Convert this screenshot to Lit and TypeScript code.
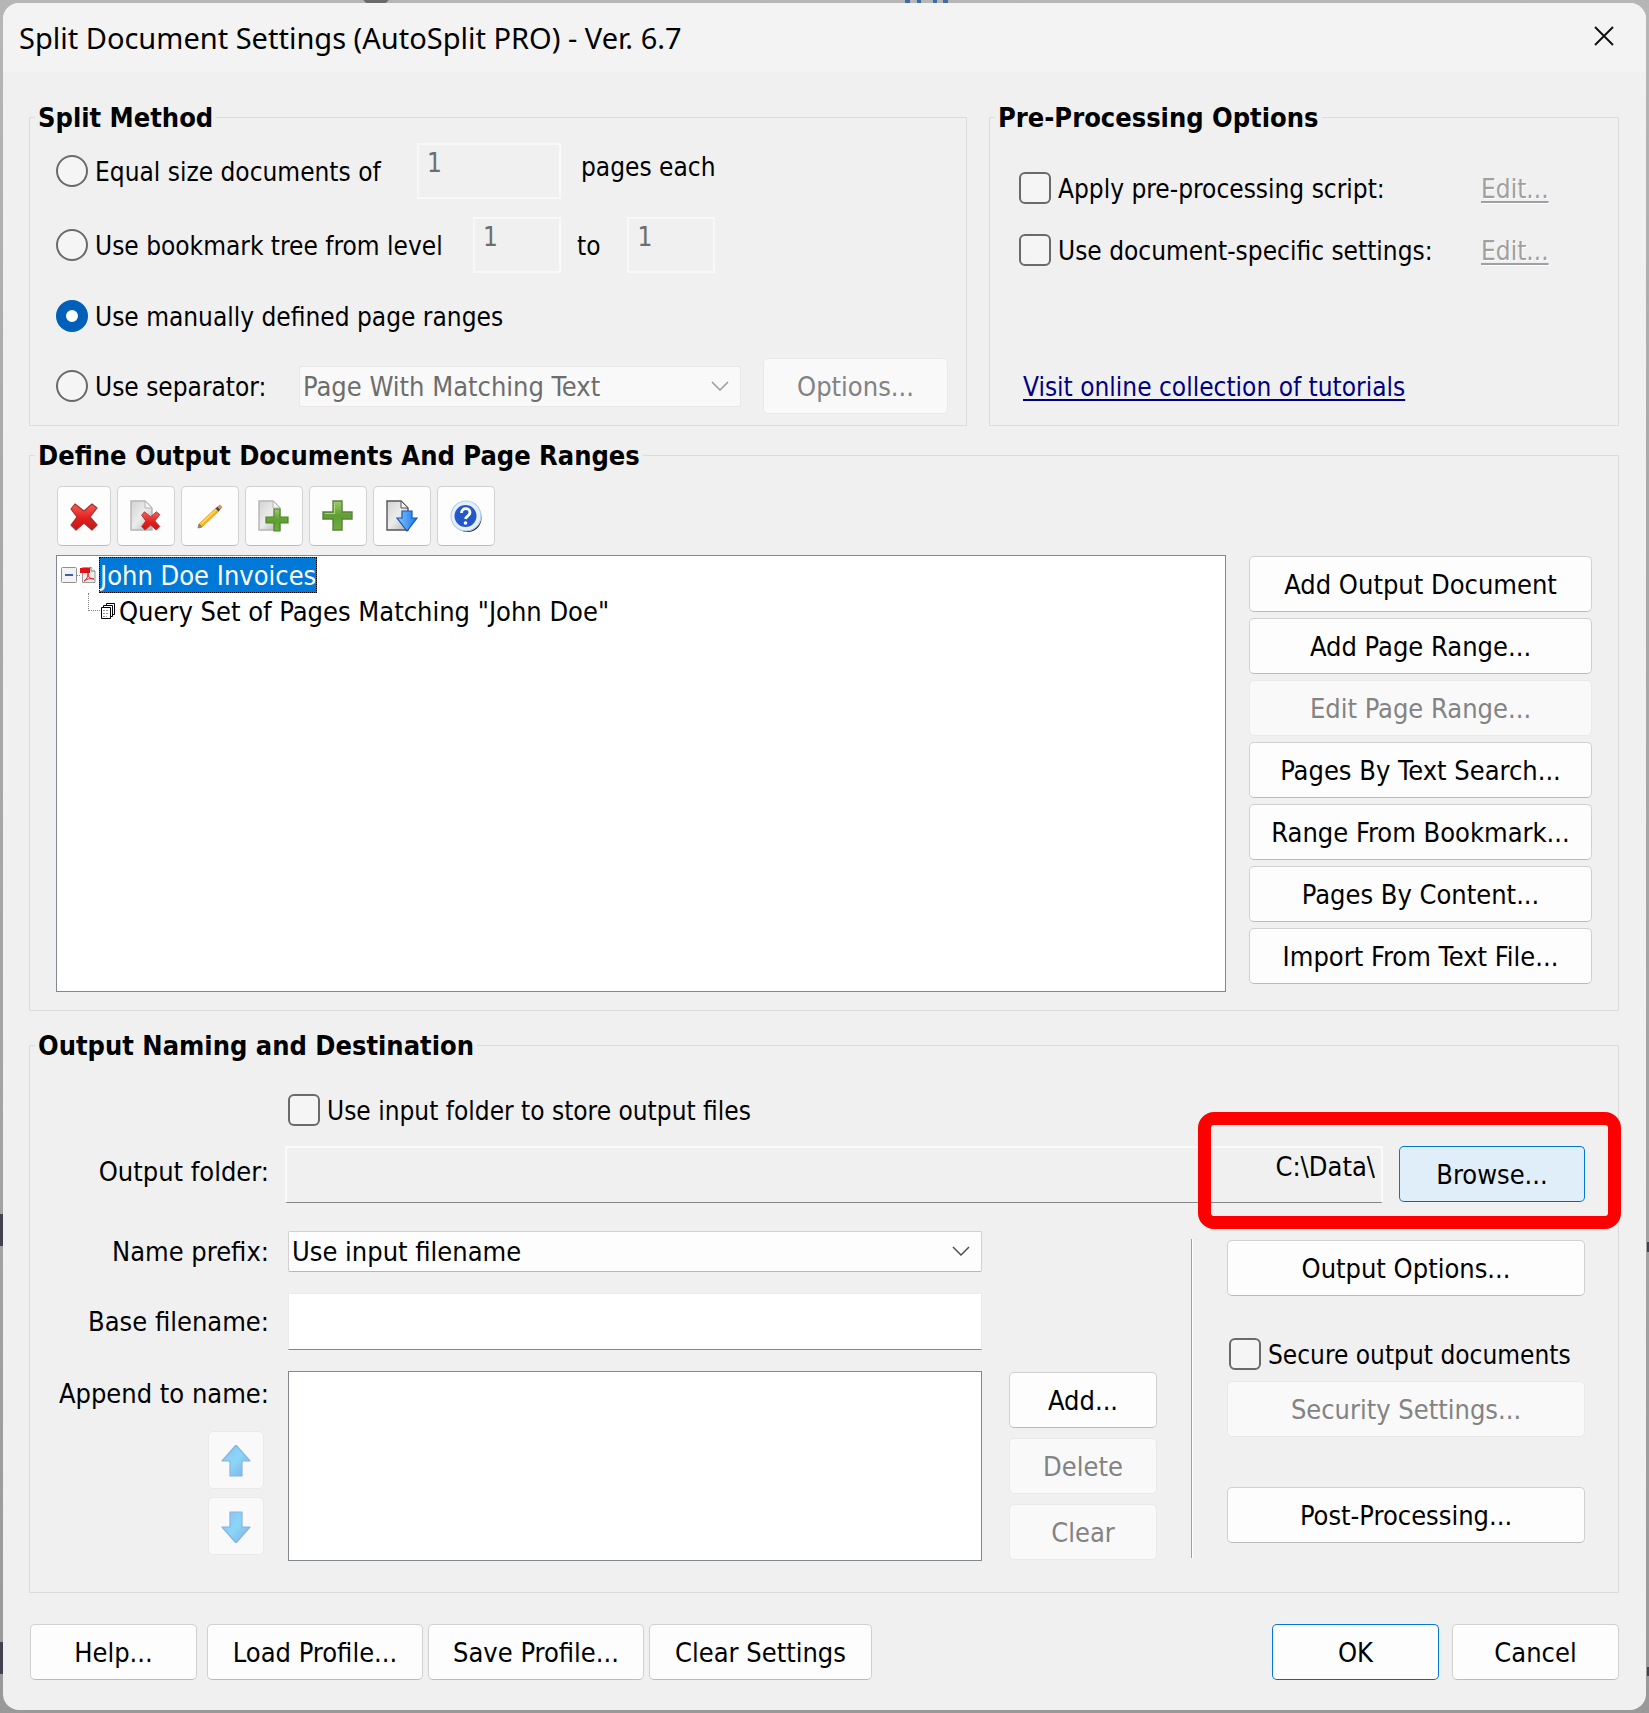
import { LitElement, html, css, svg } from "lit";
import { customElement, state } from "lit/decorators.js";

const docBody = (outline: string) => svg`
  <path d="M1 1H15L22 8V30H1Z" fill="url(#paper)" stroke=${outline} stroke-width="1.4"></path>
  <path d="M15 1V8H22Z" fill="#f4f4f4" stroke=${outline} stroke-width="1"></path>`;

const paperFill = svg`
  <linearGradient id="paper" x1="0" y1="0" x2="1" y2="1">
    <stop offset="0" stop-color="#d2d2d2"></stop>
    <stop offset="0.5" stop-color="#ececec"></stop>
    <stop offset="1" stop-color="#b0b0b0"></stop>
  </linearGradient>`;

const redFill = svg`
  <linearGradient id="red" x1="0" y1="0" x2="0" y2="1">
    <stop offset="0" stop-color="#f4605c"></stop>
    <stop offset="0.55" stop-color="#e2201f"></stop>
    <stop offset="1" stop-color="#c81414"></stop>
  </linearGradient>`;

const greenFill = svg`
  <linearGradient id="green" x1="0" y1="0" x2="0" y2="1">
    <stop offset="0" stop-color="#9ccb6c"></stop>
    <stop offset="0.5" stop-color="#5f9f31"></stop>
    <stop offset="1" stop-color="#6fae3c"></stop>
  </linearGradient>`;

const cross = svg`<path d="M7 4L16 11L24 4L29 8L22 17L29 25L24 30L16 23L8 30L3 25L9 17L3 9Z"
  fill="url(#red)" stroke="#a5302c" stroke-width="1.2" stroke-linejoin="round"></path>`;

const icons: Record<string, unknown> = {
  remove: svg`<defs>${redFill}</defs>${cross}`,
  removeDoc: svg`<defs>${redFill}${paperFill}</defs>${docBody("#b4b4b4")}
    <g transform="translate(9.500 9) scale(0.7)">${cross}</g>`,
  edit: svg`
    <path d="M5 24L22 8L25 11L8 27Z" fill="#fbb40e" stroke="#d9a02a" stroke-width="0.8"></path>
    <path d="M7 24L22.500 9.500" stroke="#ffd970" stroke-width="1.4"></path>
    <path d="M5 24L8 27L4 28Z" fill="#8b8578" stroke="#8b8578"></path>
    <path d="M21.500 8.500L23.500 6.500L26.500 9.500L24.500 11.500Z" fill="#4d4a50"></path>
    <path d="M23.500 6.500L26 4.500L28.500 7L26.500 9.500Z" fill="#e58a5c"></path>`,
  addDoc: svg`<defs>${greenFill}${paperFill}</defs>${docBody("#b4b4b4")}
    <path d="M16 9H22V17H30V23H22V31H16V23H8V17H16Z" fill="url(#green)" stroke="#4d8426" stroke-width="1.2"></path>`,
  add: svg`<defs>${greenFill}</defs>
    <path d="M11 1H20V12H30V19H20V30H11V19H1V12H11Z" fill="url(#green)" stroke="#5c7f40" stroke-width="1.4"></path>
    <path d="M12.500 2.500V13.500H3" fill="none" stroke="#a9d57e" stroke-width="1.2"></path>`,
  importDoc: svg`<defs>${paperFill}
      <linearGradient id="blue" x1="0" y1="0" x2="1" y2="0">
        <stop offset="0" stop-color="#86c8fb"></stop>
        <stop offset="1" stop-color="#1673ee"></stop>
      </linearGradient></defs>${docBody("#555")}
    <path d="M16 11H26V18H31L21 31L11 18H16Z" fill="url(#blue)" stroke="#1556b8" stroke-width="1.2"></path>`,
  help: svg`
    <circle cx="17.500" cy="18" r="14" fill="#0d1022"></circle>
    <circle cx="16" cy="16" r="15" fill="#e4f0fb" stroke="#b5cfec" stroke-width="1.2"></circle>
    <circle cx="15.500" cy="16" r="11" fill="#2358c8"></circle>
    <path d="M11.500 13C11.500 7 20 7.500 20 12.500C20 16 16 15.500 15.500 19" fill="none" stroke="#fff" stroke-width="2.800"></path>
    <circle cx="15.500" cy="23" r="1.800" fill="#fff"></circle>`,
};

const toolbar: [string, string][] = [
  ["remove", "Delete"],
  ["removeDoc", "Delete document"],
  ["edit", "Edit"],
  ["addDoc", "Add document"],
  ["add", "Add range"],
  ["importDoc", "Import"],
  ["help", "Help"],
];

const rangeActions: [string, boolean][] = [
  ["Add Output Document", false],
  ["Add Page Range...", false],
  ["Edit Page Range...", true],
  ["Pages By Text Search...", false],
  ["Range From Bookmark...", false],
  ["Pages By Content...", false],
  ["Import From Text File...", false],
];

const chevron = html`<svg class="chevron" viewBox="0 0 18 10" aria-hidden="true">
  <path d="M1 1L9 9L17 1" fill="none" stroke="currentColor" stroke-width="1.5"></path>
</svg>`;

const arrow = (down: boolean) => html`<svg class="move-icon" viewBox="0 0 30 32" aria-hidden="true">
  <defs>
    <linearGradient id="sky" x1="0" y1="0" x2="1" y2="1">
      <stop offset="0" stop-color="#8fc0ee"></stop>
      <stop offset="0.5" stop-color="#8ad6f8"></stop>
      <stop offset="1" stop-color="#7fabe0"></stop>
    </linearGradient>
  </defs>
  <path d=${down ? "M9 1H21V16H29L15 32L1 16H9Z" : "M15 0L29 16H21V31H9V16H1Z"}
    fill="url(#sky)" stroke="#86b4e2" stroke-width="1.2" stroke-linejoin="round"></path>
</svg>`;

@customElement("app-root")
export class AppRoot extends LitElement {
  @state() private method = "manual";

  static styles = css`
    :host {
      display: flex;
      box-sizing: border-box;
      min-height: 100vh;
      padding: 3px;
      background:
        radial-gradient(circle at 376px -9px, #6b6b6b 15px, transparent 16px),
        linear-gradient(#3a6ea5, #3a6ea5) 905px 0 / 5px 3px no-repeat,
        linear-gradient(#3a6ea5, #3a6ea5) 917px 0 / 4px 3px no-repeat,
        linear-gradient(#3a6ea5, #3a6ea5) 933px 0 / 4px 3px no-repeat,
        linear-gradient(#3a6ea5, #3a6ea5) 943px 0 / 5px 3px no-repeat,
        linear-gradient(#44424f, #44424f) 0 1214px / 3px 32px no-repeat,
        linear-gradient(#44424f, #44424f) 0 1642px / 3px 32px no-repeat,
        linear-gradient(#44424f, #44424f) 100% 1242px / 2px 10px no-repeat,
        linear-gradient(#44424f, #44424f) 100% 1667px / 2px 9px no-repeat,
        linear-gradient(#b6b6b6, #a9a9a9 30%, #a3a3a3 70%, #999);
      font-family: "DejaVu Sans Condensed", "DejaVu Sans", sans-serif;
      font-stretch: condensed;
      font-size: 27px;
      line-height: 33px;
      color: #000;
    }
    * { box-sizing: border-box; }
    .dialog {
      flex: 1;
      min-width: 0;
      display: flex;
      flex-direction: column;
      background: #f0f0f0;
      border-radius: 16px;
      overflow: hidden;
    }
    .titlebar {
      display: flex;
      align-items: center;
      justify-content: space-between;
      height: 69px;
      padding: 0 27px 0 16px;
      background: #f3f3f3;
    }
    .title {
      margin: 0;
      font-family: "Noto Sans", sans-serif;
      font-stretch: normal;
      font-weight: 400;
      font-size: 29px;
    }
    .close {
      display: flex;
      padding: 3px 5px 7px;
      border: 0;
      background: none;
    }
    .close-icon { width: 20px; height: 20px; }
    .body {
      flex: 1;
      display: flex;
      flex-direction: column;
      padding: 29px 27px 30px 26px;
    }
    .top {
      display: grid;
      grid-template-columns: minmax(0, 938fr) minmax(0, 630fr);
      gap: 22px;
    }
    fieldset {
      display: flex;
      flex-direction: column;
      min-width: 0;
      margin: 0;
      padding: 0;
      border: 1px solid #dcdcdc;
    }
    legend {
      margin-left: 5px;
      padding: 1px 3px 0;
      font-weight: 700;
      line-height: 32px;
    }
    input, select, button {
      font: inherit;
      color: inherit;
      margin: 0;
    }
    .choice { display: flex; align-items: center; gap: 7px; height: 32px; font-size: 26px; white-space: nowrap; }
    .choice-text { padding-top: 3px; }
    .radio, .check {
      appearance: none;
      flex: none;
      width: 32px;
      height: 32px;
      border: 2px solid #6a6a6a;
      background: #f5f5f5;
    }
    .radio { border-radius: 50%; }
    .radio:checked { border: 10px solid #005fb8; background: #fff; }
    .check { border-radius: 6px; }
    .methods { display: flex; flex-direction: column; gap: 18px; padding: 9px 18px 11px 26px; }
    .method { display: flex; align-items: center; min-height: 49px; white-space: nowrap; font-size: 26px; }
    .by-size { width: 361px; }
    .by-level { width: 417px; }
    .by-separator { width: 243px; }
    .after-size { margin-left: 20px; }
    .between { margin: 0 27px 0 16px; padding-top: 3px; }
    .lifted { padding-bottom: 7px; }
    .number {
      width: 88px;
      height: 56px;
      padding: 0 8px 16px;
      border: 2px solid #f8f8f8;
      background: #f0f0f0;
      color: #6d6d6d;
    }
    .number.wide { width: 144px; }
    .combo { position: relative; display: flex; flex: 1; min-width: 0; font-size: 27px; }
    .combo-box {
      appearance: none;
      flex: 1;
      min-width: 0;
      height: 41px;
      padding: 0 40px 0 3px;
      border: 1px solid #d0d0d0;
      border-bottom-color: #b8b8b8;
      border-radius: 2px;
      background: #fdfdfd;
      opacity: 1;
    }
    .combo-box:disabled { border-color: #e8e8e8; background: #f9f9f9; color: #6d6d6d; }
    .chevron {
      position: absolute;
      right: 12px;
      top: 15px;
      width: 18px;
      height: 10px;
      color: #505050;
      pointer-events: none;
    }
    .combo-box:disabled + .chevron { color: #9a9a9a; }
    .button {
      height: 56px;
      padding: 1px 0 0;
      border: 1px solid #d0d0d0;
      border-bottom-color: #bababa;
      border-radius: 5px;
      background: #fdfdfd;
      font-size: 27px;
      text-align: center;
      white-space: nowrap;
    }
    .button:disabled { border-color: #e9e9e9; background: #f9f9f9; color: #838383; }
    .button.primary { border-color: #0078d4; border-bottom-color: #0067c0; }
    .button.hot { background: #e0eef9; }
    .options { width: 185px; margin-left: 22px; }
    .pre { flex: 1; display: flex; flex-direction: column; gap: 30px; padding: 36px 28px 21px 29px; height: 291px; font-size: 26px; }
    .pre-row { display: grid; grid-template-columns: 462px auto; justify-content: start; height: 32px; align-items: center; }
    .off { padding-top: 3px; color: #a0a0a0; text-shadow: 1px 1px #fff; text-decoration: underline; text-underline-offset: 3px; text-decoration-thickness: 2px; }
    .tutorials {
      margin-top: auto;
      padding-left: 4px;
      color: #000080;
      text-underline-offset: 3px;
      text-decoration-thickness: 2px;
    }
    .define { margin-top: 13px; }
    .define-body { display: grid; grid-template-columns: minmax(0, 1fr) 343px; gap: 9px 23px; padding: 14px 26px 18px; }
    .toolbar { grid-column: 1 / -1; display: flex; gap: 6px; padding-left: 1px; }
    .tool { display: flex; align-items: center; justify-content: center; width: 58px; height: 60px; padding: 0; }
    .tool:first-child { width: 54px; }
    .tool-icon { width: 32px; height: 32px; }
    .tree {
      min-height: 437px;
      margin: 0;
      padding: 1px 4px;
      border: 1px solid #828790;
      background: #fff;
      list-style: none;
      white-space: nowrap;
    }
    .branch { margin: 0; padding: 0 0 0 27px; list-style: none; }
    .node { display: flex; align-items: center; height: 36px; }
    .expander { display: flex; padding: 0; border: 0; background: none; }
    .expander-icon { width: 16px; height: 16px; }
    .dots { width: 3px; border-top: 1px dotted #808080; }
    .pdf-icon { width: 16px; height: 16px; margin-right: 3px; }
    .selected { height: 36px; padding: 1px 0; border: 1px dotted #ff8728; outline: 1px dotted #000; outline-offset: -1px; background: #0078d7; color: #fff; }
    .elbow { width: 12px; height: 18px; margin-bottom: 18px; border: 1px dotted #808080; border-width: 0 0 1px 1px; }
    .pages-icon { width: 16px; height: 16px; margin-right: 3px; }
    .actions { display: flex; flex-direction: column; gap: 6px; padding-top: 1px; }
    .output { margin-top: 18px; }
    .output-body { padding: 32px 33px 31px 0; }
    .use-input { padding-left: 258px; }
    .folder {
      position: relative;
      display: grid;
      grid-template-columns: 239px minmax(0, 1fr) 186px;
      column-gap: 16px;
      margin: 20px 0 28px;
      align-items: start;
    }
    .label { text-align: right; white-space: nowrap; }
    .label.lifted { align-self: center; }
    .path {
      min-width: 0;
      height: 57px;
      padding: 0 6px 18px;
      border: 2px solid #fafafa;
      border-bottom: 1px solid #868686;
      background: #f0f0f0;
      text-align: right;
    }
    .highlight {
      position: absolute;
      top: -34px;
      right: -36px;
      bottom: -26px;
      width: 423px;
      border: 13px solid #f00;
      border-radius: 16px;
      pointer-events: none;
    }
    .columns { display: grid; grid-template-columns: minmax(0, 1fr) 2px 358px; column-gap: 34px; }
    .naming { display: grid; grid-template-columns: 239px minmax(0, 1fr) 148px; gap: 21px 0; align-items: center; }
    .naming .combo, .base, .parts { margin: 0 27px 0 19px; }
    .base {
      height: 57px;
      min-width: 0;
      padding: 0 8px;
      border: 1px solid #ebebeb;
      border-bottom: 1px solid #868686;
      background: #fff;
    }
    .parts {
      appearance: none;
      min-width: 0;
      height: 190px;
      padding: 0;
      border: 1px solid #828790;
      border-radius: 0;
      background: #fff;
      overflow: hidden;
    }
    .append { align-self: start; display: flex; flex-direction: column; align-items: flex-end; padding-top: 6px; }
    .movers { display: flex; flex-direction: column; gap: 8px; padding: 21px 5px 0 0; }
    .move { display: flex; align-items: center; justify-content: center; width: 56px; height: 58px; }
    .move-icon { width: 30px; height: 32px; }
    .stack { display: flex; flex-direction: column; gap: 10px; }
    .rule { margin: 8px 0 3px; border-left: 1px solid #a0a0a0; border-right: 1px solid #fff; }
    .security { display: flex; flex-direction: column; padding-top: 9px; }
    .secure { margin: 42px 0 11px 2px; }
    .post { margin-top: 50px; }
    .footer { display: flex; gap: 5px; padding: 31px 0 0 1px; }
    .w-small { width: 167px; }
    .w-medium { width: 216px; }
    .w-large { width: 223px; }
    .help-button { margin-right: 5px; }
    .confirm { display: flex; gap: 13px; margin-left: auto; }
  `;

  private radio(id: string, text: string, width: string) {
    return html`<label class="choice ${width}">
      <input class="radio" type="radio" name="method" .checked=${this.method === id}
        @change=${() => (this.method = id)} />
      <span class="choice-text">${text}</span>
    </label>`;
  }

  private check(text: string, extra = "") {
    return html`<label class="choice ${extra}"><input class="check" type="checkbox" /><span class="choice-text">${text}</span></label>`;
  }

  private splitMethod() {
    return html`<fieldset>
      <legend>Split Method</legend>
      <div class="methods">
        <div class="method">
          ${this.radio("size", "Equal size documents of", "by-size")}
          <input class="number wide" id="size" value="1" disabled />
          <label class="after-size lifted" for="size">pages each</label>
        </div>
        <div class="method">
          ${this.radio("level", "Use bookmark tree from level", "by-level")}
          <input class="number" aria-label="From level" value="1" disabled />
          <label class="between" for="to-level">to</label>
          <input class="number" id="to-level" value="1" disabled />
        </div>
        <div class="method">${this.radio("manual", "Use manually defined page ranges", "")}</div>
        <div class="method">
          ${this.radio("separator", "Use separator:", "by-separator")}
          <span class="combo">
            <select class="combo-box" aria-label="Separator" disabled>
              <option>Page With Matching Text</option>
            </select>
            ${chevron}
          </span>
          <button class="button options" disabled>Options...</button>
        </div>
      </div>
    </fieldset>`;
  }

  private preProcessing() {
    return html`<fieldset>
      <legend>Pre-Processing Options</legend>
      <div class="pre">
        <div class="pre-row">
          ${this.check("Apply pre-processing script:")}
          <a class="off" href="#script" aria-disabled="true">Edit...</a>
        </div>
        <div class="pre-row">
          ${this.check("Use document-specific settings:")}
          <a class="off" href="#settings" aria-disabled="true">Edit...</a>
        </div>
        <a class="tutorials" href="#tutorials">Visit online collection of tutorials</a>
      </div>
    </fieldset>`;
  }

  private define() {
    return html`<fieldset class="define">
      <legend>Define Output Documents And Page Ranges</legend>
      <div class="define-body">
        <div class="toolbar">
          ${toolbar.map(
            ([icon, name]) => html`<button class="button tool" aria-label=${name}>
              <svg class="tool-icon" viewBox="0 0 32 32" aria-hidden="true">${icons[icon]}</svg>
            </button>`
          )}
        </div>
        <ul class="tree" role="tree">
          <li role="treeitem" aria-expanded="true" aria-selected="true">
            <div class="node">
              <button class="expander" aria-label="Collapse">
                <svg class="expander-icon" viewBox="0 0 16 16" aria-hidden="true">
                  <rect x="0.500" y="0.500" width="15" height="15" rx="1" fill="#f3f3f3" stroke="#919191"></rect>
                  <path d="M4 8H12" stroke="#3a5fb5" stroke-width="2"></path>
                </svg>
              </button>
              <span class="dots"></span>
              <svg class="pdf-icon" viewBox="0 0 16 16" aria-hidden="true">
                <path d="M2.500 0.500H11L15 4V15.500H2.500Z" fill="#ececec" stroke="#9a9a9a"></path>
                <path d="M11 0V4H15" fill="#fff" stroke="#808080"></path>
                <path d="M0 1H10V6H0Z" fill="#e01414"></path>
                <path d="M4 14C7 12 9 8 8 6C7 9 10 12 14 12C10 11 7 12 4 14Z" fill="none" stroke="#e02020"></path>
              </svg>
              <span class="selected">John Doe Invoices</span>
            </div>
            <ul class="branch" role="group">
              <li class="node" role="treeitem">
                <span class="elbow"></span>
                <svg class="pages-icon" viewBox="0 0 16 16" aria-hidden="true">
                  <path d="M6.500 2.500V0.500H14.500V11.500H12.500" fill="#fff" stroke="#000"></path>
                  <path d="M3.500 4.500V2.500H12.500V13.500H10.500" fill="#fff" stroke="#000"></path>
                  <path d="M1.500 4.500H10.500V15.500H1.500Z" fill="#fff" stroke="#000"></path>
                  <path d="M3 7.500H9M3 10.500H9M3 13.500H7" stroke="#999" stroke-dasharray="2 1"></path>
                </svg>
                <span>Query Set of Pages Matching "John Doe"</span>
              </li>
            </ul>
          </li>
        </ul>
        <div class="actions">
          ${rangeActions.map(([text, off]) => html`<button class="button" ?disabled=${off}>${text}</button>`)}
        </div>
      </div>
    </fieldset>`;
  }

  private output() {
    return html`<fieldset class="output">
      <legend>Output Naming and Destination</legend>
      <div class="output-body">
        ${this.check("Use input folder to store output files", "use-input")}
        <div class="folder">
          <label class="label lifted" for="folder">Output folder:</label>
          <input class="path" id="folder" readonly .value=${"C:\\Data\\"} />
          <button class="button primary hot">Browse...</button>
          <span class="highlight"></span>
        </div>
        <div class="columns">
          <div class="naming">
            <label class="label" for="prefix">Name prefix:</label>
            <span class="combo">
              <select class="combo-box" id="prefix"><option>Use input filename</option></select>
              ${chevron}
            </span>
            <span></span>
            <label class="label" for="base">Base filename:</label>
            <input class="base" id="base" />
            <span></span>
            <div class="append">
              <label class="label" for="parts">Append to name:</label>
              <div class="movers">
                <button class="button move" aria-label="Move up" disabled>${arrow(false)}</button>
                <button class="button move" aria-label="Move down" disabled>${arrow(true)}</button>
              </div>
            </div>
            <select class="parts" id="parts" size="5"></select>
            <div class="stack">
              <button class="button">Add...</button>
              <button class="button" disabled>Delete</button>
              <button class="button" disabled>Clear</button>
            </div>
          </div>
          <div class="rule"></div>
          <div class="security">
            <button class="button">Output Options...</button>
            ${this.check("Secure output documents", "secure")}
            <button class="button" disabled>Security Settings...</button>
            <button class="button post">Post-Processing...</button>
          </div>
        </div>
      </div>
    </fieldset>`;
  }

  render() {
    return html`<main class="dialog">
      <header class="titlebar">
        <h1 class="title">Split Document Settings (AutoSplit PRO) - Ver. 6.7</h1>
        <button class="close" aria-label="Close">
          <svg class="close-icon" viewBox="0 0 20 20" aria-hidden="true">
            <path d="M1 1L19 19M19 1L1 19" stroke="#111" stroke-width="2"></path>
          </svg>
        </button>
      </header>
      <div class="body">
        <div class="top">${this.splitMethod()}${this.preProcessing()}</div>
        ${this.define()} ${this.output()}
        <footer class="footer">
          <button class="button w-small help-button">Help...</button>
          <button class="button w-medium">Load Profile...</button>
          <button class="button w-medium">Save Profile...</button>
          <button class="button w-large">Clear Settings</button>
          <div class="confirm">
            <button class="button primary w-small">OK</button>
            <button class="button w-small">Cancel</button>
          </div>
        </footer>
      </div>
    </main>`;
  }
}
